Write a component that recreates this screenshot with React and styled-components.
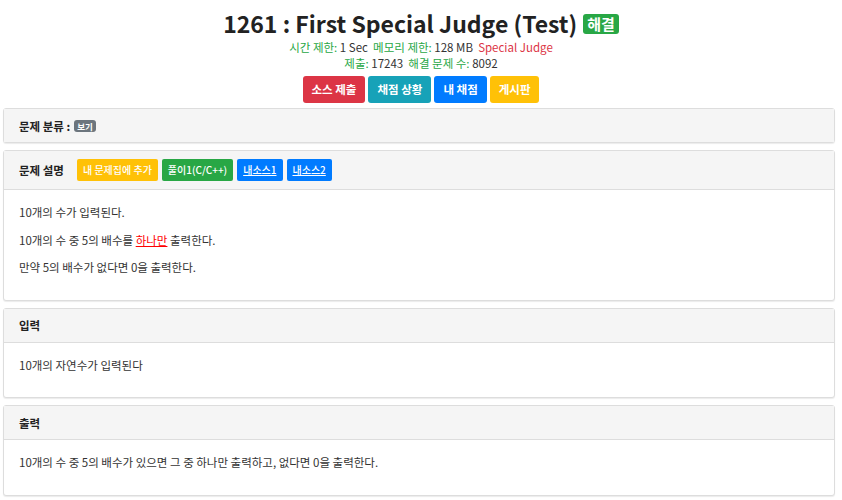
import styled, { createGlobalStyle } from "styled-components";

const GlobalStyle = createGlobalStyle`
  body {
    margin: 0;
    background: #fff;
    color: #333;
    font-family: "Noto Sans CJK KR", "Noto Sans", sans-serif;
  }
`;

const colors = {
  red: "#dc3545",
  teal: "#17a2b8",
  blue: "#007bff",
  yellow: "#ffc107",
  green: "#28a745",
  gray: "#6c757d",
};

export default function App() {
  return (
    <>
      <GlobalStyle />
      <Header>
        <Title>
          1261 : First Special Judge (Test) <SolvedBadge>해결</SolvedBadge>
        </Title>
        <Info>
          <Label>시간 제한:</Label> 1 Sec&nbsp; <Label>메모리 제한:</Label> 128 MB&nbsp;{" "}
          <Special>Special Judge</Special>
        </Info>
        <Info>
          <Label>제출:</Label> 17243&nbsp; <Label>해결 문제 수:</Label> 8092
        </Info>
        <ButtonRow>
          <Button $color={colors.red}>소스 제출</Button>
          <Button $color={colors.teal}>채점 상황</Button>
          <Button $color={colors.blue}>내 채점</Button>
          <Button $color={colors.yellow}>게시판</Button>
        </ButtonRow>
      </Header>

      <Container>
        <Card>
          <CardHeader>
            문제 분류 : <SmallBadge>보기</SmallBadge>
          </CardHeader>
        </Card>

        <Card>
          <CardHeader>
            <span>문제 설명</span>
            <Tools>
              <SmallButton $color={colors.yellow}>내 문제집에 추가</SmallButton>
              <SmallButton $color={colors.green}>풀이1(C/C++)</SmallButton>
              <SmallButton $color={colors.blue} $underline>
                내소스1
              </SmallButton>
              <SmallButton $color={colors.blue} $underline>
                내소스2
              </SmallButton>
            </Tools>
          </CardHeader>
          <CardBody>
            <p>10개의 수가 입력된다.</p>
            <p>
              10개의 수 중 5의 배수를 <Highlight>하나만</Highlight> 출력한다.
            </p>
            <p>만약 5의 배수가 없다면 0을 출력한다.</p>
          </CardBody>
        </Card>

        <Card>
          <CardHeader>입력</CardHeader>
          <CardBody>
            <p>10개의 자연수가 입력된다</p>
          </CardBody>
        </Card>

        <Card>
          <CardHeader>출력</CardHeader>
          <CardBody>
            <p>10개의 수 중 5의 배수가 있으면 그 중 하나만 출력하고, 없다면 0을 출력한다.</p>
          </CardBody>
        </Card>
      </Container>
    </>
  );
}

const Header = styled.header`
  text-align: center;
  padding-top: 6px;
`;

const Title = styled.h1`
  display: flex;
  justify-content: center;
  align-items: center;
  gap: 6px;
  margin: 0;
  height: 33px;
  font-size: 23px;
  font-weight: 700;
  color: #222;
`;

const SolvedBadge = styled.span`
  background: ${colors.green};
  color: #fff;
  font-size: 15px;
  line-height: 20px;
  padding: 0 4px;
  border-radius: 3px;
  margin-top: 2px;
`;

const Info = styled.div`
  font-size: 11.5px;
  line-height: 16px;
  color: #333;
`;

const Label = styled.span`
  color: ${colors.green};
`;

const Special = styled.span`
  color: ${colors.red};
`;

const ButtonRow = styled.div`
  display: flex;
  justify-content: center;
  gap: 3px;
  margin-top: 5px;
`;

const Button = styled.span`
  background: ${({ $color }) => $color};
  color: #fff;
  font-size: 11.5px;
  font-weight: 700;
  line-height: 27px;
  padding: 0 9px;
  border-radius: 3px;
`;

const Container = styled.main`
  padding: 5px 7px 0 3px;
`;

const Card = styled.section`
  border: 1px solid #ddd;
  border-radius: 3px;
  box-shadow: 0 1px 1px rgba(0, 0, 0, 0.08);
  margin-bottom: 7px;
  background: #fff;
`;

const CardHeader = styled.div`
  display: flex;
  align-items: center;
  gap: 4px;
  background: #f5f5f5;
  padding: 8px 15px;
  min-height: 17px;
  font-size: 11.5px;
  font-weight: 700;
  color: #222;

  &:not(:last-child) {
    border-bottom: 1px solid #ddd;
  }
`;

const Tools = styled.div`
  display: flex;
  gap: 4px;
  margin-left: 9px;
`;

const SmallBadge = styled.span`
  background: ${colors.gray};
  color: #fff;
  font-size: 8.5px;
  line-height: 12px;
  padding: 0 3px;
  border-radius: 3px;
`;

const SmallButton = styled.span`
  background: ${({ $color }) => $color};
  color: #fff;
  font-size: 10px;
  font-weight: 500;
  line-height: 22px;
  padding: 0 6px;
  border-radius: 2px;
  text-decoration: ${({ $underline }) => ($underline ? "underline" : "none")};
`;

const CardBody = styled.div`
  padding: 14px 15px 13px;
  font-size: 11.5px;
  color: #333;

  p {
    margin: 0 0 10px;
    line-height: 17.5px;
  }
`;

const Highlight = styled.u`
  color: #f00;
`;
